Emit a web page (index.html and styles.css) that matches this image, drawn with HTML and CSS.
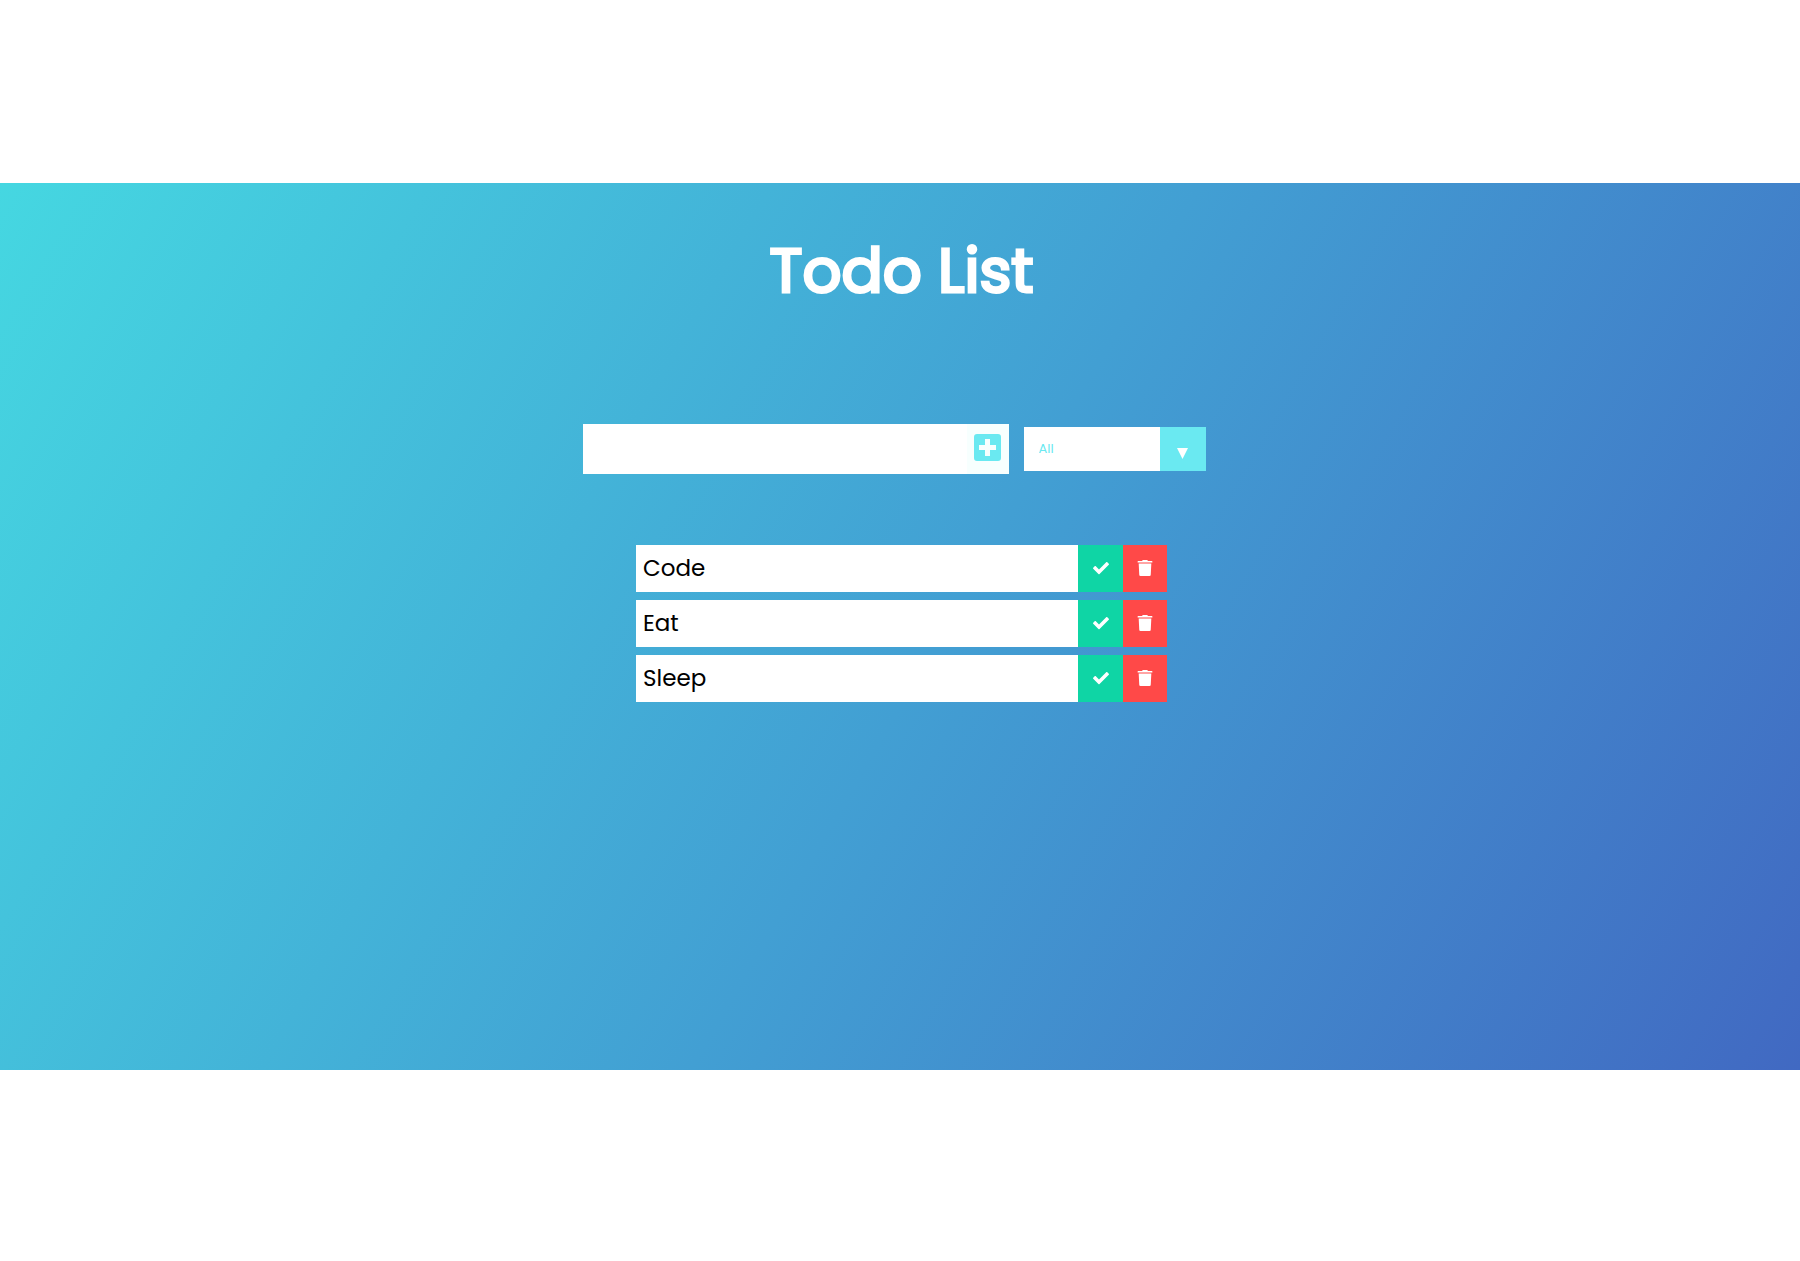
FILE: index.html
```html
<!DOCTYPE html>
<html lang="en">
<head>
  <meta charset="UTF-8" />
  <meta name="viewport" content="width=device-width, initial-scale=1.0" />
  <title>Todo List</title>
  <link rel="stylesheet" href="styles.css">
</head>
<body>
  <main class="app">
    <header>
      <h1>Todo List</h1>
    </header>

    <form class="todo-form">
      <div class="add">
        <input type="text" class="todo-input" aria-label="New todo" />
        <button class="todo-button" type="submit" aria-label="Add todo">
          <svg viewBox="0 0 27 27"><path fill-rule="evenodd" d="M3 0h21a3 3 0 0 1 3 3v21a3 3 0 0 1-3 3H3a3 3 0 0 1-3-3V3a3 3 0 0 1 3-3zM11 5v6H5v5h6v6h5v-6h6v-5h-6V5z"/></svg>
        </button>
      </div>
      <div class="select">
        <select name="todos" class="filter-todo" aria-label="Filter todos">
          <option value="all">All</option>
          <option value="completed">Completed</option>
          <option value="uncompleted">Uncompleted</option>
        </select>
        <span class="arrow">
          <svg viewBox="0 0 11 11"><path d="M0 0h11L5.500 11z"/></svg>
        </span>
      </div>
    </form>

    <ul class="todo-list"></ul>
  </main>

  <script src="app.js"></script>
</body>
</html>
```
FILE: styles.css
```css
* {
  margin: 0;
  padding: 0;
  box-sizing: border-box;
}

body {
  background: white;
  font-family: Poppins, Inter, sans-serif;
  min-height: 100vh;
  display: flex;
  flex-direction: column;
  padding: 183px 0 191px;
}

.app {
  flex: 1;
  padding-left: 3px;
  background: linear-gradient(120deg, #45d7e1, #429fd3 52%, #4169c2);
}

header {
  padding-top: 40px;
  text-align: center;
}

h1 {
  color: white;
  font-size: 61px;
  line-height: 96px;
  font-weight: 400;
  -webkit-text-stroke: 3px white;
}

.todo-form {
  display: flex;
  justify-content: center;
  align-items: center;
  margin-top: 105px;
}

.add {
  display: flex;
}

.todo-input {
  width: 384px;
  height: 50px;
  padding: 8px;
  border: none;
  background: white;
  font-family: inherit;
  font-size: 23px;
}

.todo-button {
  width: 42px;
  height: 50px;
  border: none;
  background: #f7fffe;
  cursor: pointer;
  display: flex;
  justify-content: center;
  align-items: flex-start;
  padding-top: 10px;
}

.todo-button svg {
  width: 27px;
  height: 27px;
  fill: #6ae9f1;
}

.select {
  position: relative;
  margin: 0 15px;
}

.filter-todo {
  display: block;
  appearance: none;
  width: 182px;
  height: 44px;
  padding: 0 15px 2px;
  border: none;
  border-radius: 0;
  background: white;
  color: #6ae9f1;
  font-family: inherit;
  font-size: 13px;
  cursor: pointer;
}

.arrow {
  position: absolute;
  top: 0;
  right: 0;
  width: 46px;
  height: 44px;
  padding-top: 8px;
  background: #6ae9f1;
  display: flex;
  justify-content: center;
  align-items: center;
  pointer-events: none;
}

.arrow svg {
  width: 11px;
  height: 11px;
  fill: white;
}

.todo-list {
  width: 531px;
  max-width: 100%;
  margin: 71px auto 0;
  list-style: none;
  display: flex;
  flex-direction: column;
  gap: 8px;
}

.todo {
  display: flex;
  height: 47px;
  background: white;
  color: black;
  font-size: 23px;
}

.todo-item {
  flex: 1;
  padding: 0 7px;
  line-height: 47px;
}

.complete-btn,
.trash-btn {
  border: none;
  cursor: pointer;
  display: flex;
  justify-content: center;
  align-items: center;
  padding-bottom: 2px;
}

.complete-btn {
  width: 45px;
  background: #0fd5a5;
}

.trash-btn {
  width: 44px;
  background: #ff4948;
}

.complete-btn svg,
.trash-btn svg {
  width: 16px;
  height: 16px;
  fill: white;
}
```
FILE: app.js
```javascript
const todoList = document.querySelector(".todo-list");
const filterOption = document.querySelector(".filter-todo");
const todoInput = document.querySelector(".todo-input");

const checkIcon = '<svg viewBox="0 0 512 512"><path d="M173.900 449.400l-166.400-166.400c-10-10-10-26.200 0-36.200l46.200-46.200c10-10 26.200-10 36.200 0L192 302.700 422.100 72.600c10-10 26.200-10 36.200 0l46.200 46.200c10 10 10 26.200 0 36.200l-294.400 294.400c-10 10-26.200 10-36.200 0z"/></svg>';
const trashIcon = '<svg viewBox="0 0 512 512"><path d="M54 112h404l-18 360a40 40 0 0 1-40 40H112a40 40 0 0 1-40-40zM36 32h124l10-19a24 24 0 0 1 21-13h130a24 24 0 0 1 21 13l10 19h124a16 16 0 0 1 16 16v32H20V48a16 16 0 0 1 16-16z"/></svg>';

function addTodo(text) {
  const todo = document.createElement("li");
  todo.className = "todo";
  todo.innerHTML = `<span class="todo-item"></span>
    <button class="complete-btn" aria-label="Complete">${checkIcon}</button>
    <button class="trash-btn" aria-label="Delete">${trashIcon}</button>`;
  todo.querySelector(".todo-item").innerText = text;
  todo.querySelector(".complete-btn").onclick = () => {
    todo.classList.toggle("completed");
    filterTodos();
  };
  todo.querySelector(".trash-btn").onclick = () => todo.remove();
  todoList.appendChild(todo);
}

function filterTodos() {
  todoList.querySelectorAll(".todo").forEach(todo => {
    const done = todo.classList.contains("completed");
    const show = filterOption.value === "all" || (filterOption.value === "completed") === done;
    todo.style.display = show ? "" : "none";
  });
}

document.querySelector(".todo-form").addEventListener("submit", e => {
  e.preventDefault();
  if (!todoInput.value) return;
  addTodo(todoInput.value);
  todoInput.value = "";
  filterTodos();
});
filterOption.addEventListener("change", filterTodos);

["Code", "Eat", "Sleep"].forEach(addTodo);
```
